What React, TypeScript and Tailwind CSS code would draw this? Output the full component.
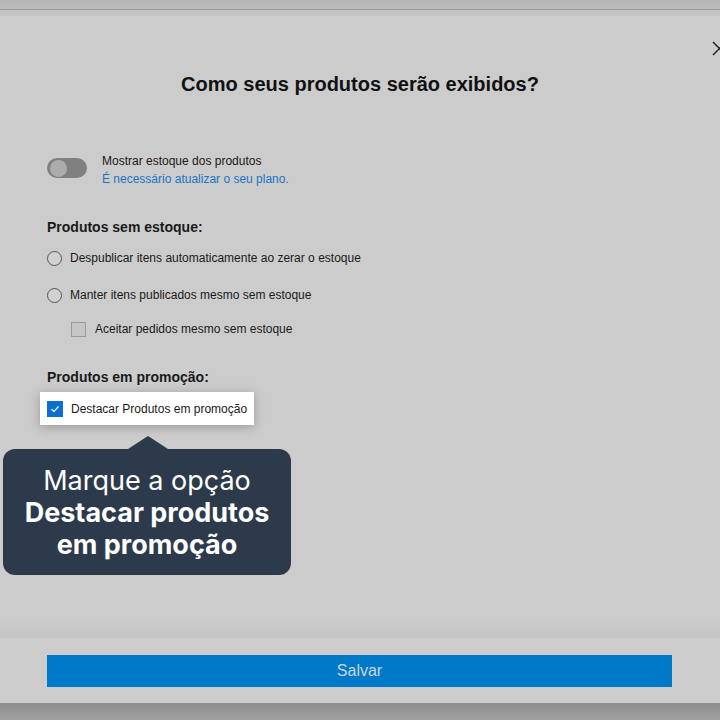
export default function App() {
  return (
    <div className="relative w-[720px] h-[720px] overflow-hidden bg-[#cccccc] flex flex-col font-['Liberation_Sans',Arial,sans-serif] text-[#1a1a1a]">
      {/* top backdrop */}
      <div className="h-[10px] bg-gradient-to-b from-[#b6b6b6] to-[#bcbcbc] border-b border-[#999999]" />
      <div className="h-[6px] bg-[#c3c3c3]" />

      {/* close */}
      <svg className="absolute left-[712px] top-[41px]" width="15" height="15" viewBox="0 0 15 15">
        <path d="M1 1 L14 14 M14 1 L1 14" stroke="#1a1a1a" strokeWidth="1.4" fill="none" />
      </svg>

      {/* body */}
      <div className="flex-1 px-[47px]">
        <h1 className="mt-[54px] text-center text-[20px] leading-[28px] font-bold text-[#111]">
          Como seus produtos serão exibidos?
        </h1>

        <div className="mt-[54px] flex items-start gap-[15px]">
          <div className="mt-[6px] w-[40px] h-[20px] rounded-full bg-[#808080] flex items-center pl-[3px]">
            <div className="w-[17px] h-[17px] rounded-full bg-[#adadad]" />
          </div>
          <div className="text-[12px] leading-[18px]">
            <div>Mostrar estoque dos produtos</div>
            <div className="text-[#1b75c4]">É necessário atualizar o seu plano.</div>
          </div>
        </div>

        <h2 className="mt-[29px] text-[14px] leading-[20px] font-bold">Produtos sem estoque:</h2>

        <div className="mt-[11px] flex items-center gap-[8px] h-[20px] text-[12px]">
          <div className="w-[15px] h-[15px] rounded-full border border-[#555] bg-[#d2d2d2]" />
          <span>Despublicar itens automaticamente ao zerar o estoque</span>
        </div>
        <div className="mt-[17px] flex items-center gap-[8px] h-[20px] text-[12px]">
          <div className="w-[15px] h-[15px] rounded-full border border-[#555] bg-[#d2d2d2]" />
          <span>Manter itens publicados mesmo sem estoque</span>
        </div>
        <div className="mt-[14px] ml-[24px] flex items-center gap-[9px] h-[20px] text-[12px]">
          <div className="w-[15px] h-[15px] border border-[#9a9a9a] bg-[#c6c6c6]" />
          <span>Aceitar pedidos mesmo sem estoque</span>
        </div>

        <h2 className="mt-[28px] text-[14px] leading-[20px] font-bold">Produtos em promoção:</h2>

        <div className="mt-[5px] -ml-[7px] w-[214px] h-[33px] bg-white shadow-[0_2px_10px_rgba(0,0,0,0.25)] flex items-center gap-[8px] pl-[7px] text-[12px]">
          <div className="w-[16px] h-[16px] bg-[#0a6fd0] flex items-center justify-center">
            <svg width="10" height="10" viewBox="0 0 10 10">
              <path d="M1.5 5.2 L4 7.5 L8.5 2.5" stroke="white" strokeWidth="1.2" fill="none" />
            </svg>
          </div>
          <span>Destacar Produtos em promoção</span>
        </div>
      </div>

      {/* tooltip */}
      <div className="absolute left-[3px] top-[449px] w-[288px] h-[126px] rounded-[12px] bg-[#2c3a4b] flex flex-col items-center justify-center pt-[1px] text-white text-[27px] leading-[32px] font-['Inter',sans-serif]">
        <div className="absolute -top-[13px] left-[125px] w-0 h-0 border-l-[20px] border-r-[20px] border-b-[13px] border-l-transparent border-r-transparent border-b-[#2c3a4b]" />
        <div className="font-normal">Marque a opção</div>
        <div className="font-bold">Destacar produtos</div>
        <div className="font-bold">em promoção</div>
      </div>

      {/* footer */}
      <div className="h-[18px] bg-gradient-to-b from-[#cbcbcb] to-[#c4c4c4]" />
      <div className="h-[65px] bg-[#cdcdcd] px-[47px] pt-[17px]">
        <button className="w-[625px] h-[32px] bg-[#0079c9] text-[#cbd6df] text-[16px]">Salvar</button>
      </div>
      <div className="h-[17px] bg-gradient-to-b from-[#8e8e8e] to-[#a0a0a0]" />
    </div>
  );
}
